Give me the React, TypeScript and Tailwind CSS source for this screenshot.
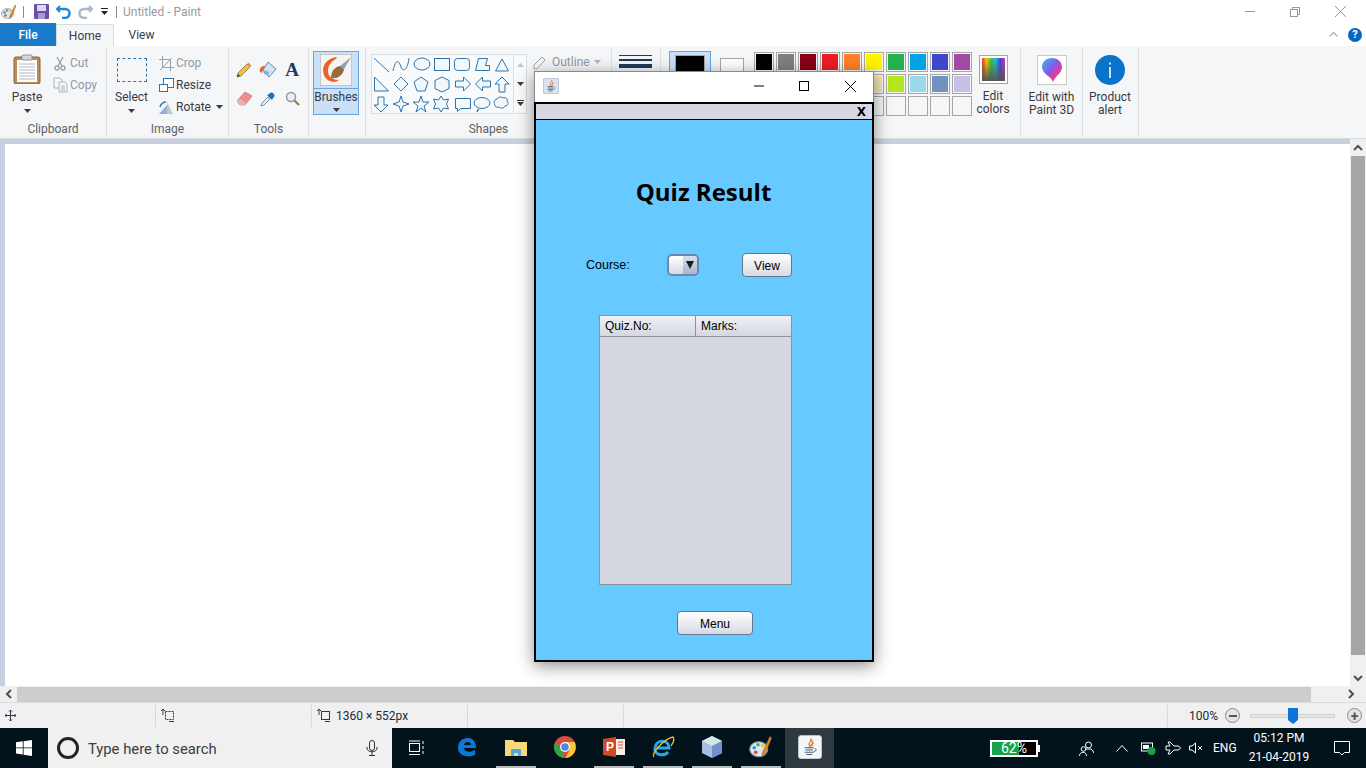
import React from 'react';

const UI_FONT = 'font-["Roboto","Noto_Sans",sans-serif]';

const PALETTE_ROW_1 = ['#000000', '#7f7f7f', '#880015', '#ed1c24', '#ff7f27', '#fff200', '#22b14c', '#00a2e8', '#3f48cc', '#a349a4'];
const PALETTE_ROW_2 = ['#ffffff', '#c3c3c3', '#b97a57', '#ffaec9', '#ffc90e', '#efe4b0', '#b5e61d', '#99d9ea', '#7092be', '#c8bfe7'];

const Caret: React.FC<{ color?: string }> = ({ color = '#3c3c3c' }) => (
  <svg width="7" height="4" viewBox="0 0 7 4"><path d="M0 0h7L3.5 4z" fill={color} /></svg>
);

const PaintLogo: React.FC<{ size: number }> = ({ size }) => (
  <svg width={size} height={size} viewBox="0 0 32 32">
    <ellipse cx="13" cy="19" rx="12" ry="10" fill="#dfe8ee" stroke="#7d98aa" strokeWidth="1.5" />
    <circle cx="7" cy="17" r="2.4" fill="#2d8fd5" />
    <circle cx="12" cy="13" r="2.4" fill="#45b04a" />
    <circle cx="18" cy="14" r="2.2" fill="#f0c030" />
    <circle cx="9" cy="23" r="2.4" fill="#d8453a" />
    <path d="M28 2l2 2-9 22-4 3 1-6z" fill="#e08a2c" stroke="#a86a20" strokeWidth=".8" />
  </svg>
);

const JavaIcon: React.FC<{ size: number; light?: boolean }> = ({ size, light }) => (
  <svg width={size} height={size} viewBox="0 0 32 32">
    <rect x=".5" y=".5" width="31" height="31" rx="4" fill={light ? '#f4f5f6' : '#dbe4ec'} stroke={light ? '#d0d4d8' : '#7d93a8'} />
    <path d="M17 5c2 3-4 5-2 9 1 1 2 2 1 3-1-3 5-5 3-8-1-2-1-3-2-4zM21 10c-2 1-3 3-2 5" fill="none" stroke="#e2752a" strokeWidth="1.5" />
    <path d="M9 17h12M10 20h10M9 23h12M11 26h8" stroke="#40607c" strokeWidth="1.5" />
    <path d="M22 18c3 0 3 4-1 4" fill="none" stroke="#40607c" strokeWidth="1.2" />
  </svg>
);

const ShapesArt: React.FC = () => (
  <svg width="140" height="58" viewBox="0 0 140 58" fill="#f1f8fc" stroke="#2f74ad" strokeWidth="1">
    {/* row 1 */}
    <path d="M2 3l15 14M21 16c3-14 6-10 8-4s7 2 8-9" fill="none" />
    <ellipse cx="50" cy="9" rx="8" ry="6" />
    <rect x="62.500" y="3.500" width="15" height="12" />
    <rect x="82.500" y="3.500" width="15" height="12" rx="3" />
    <path d="M106.500 3.500h9l-2 7h4v5h-14z" />
    <path d="M123.500 16l6.500-12 6.500 12z" />
    {/* row 2 */}
    <path d="M2.500 36V22l14 14z" />
    <path d="M29 22l7 7-7 7-7-7z" />
    <path d="M49 22l7 5-3 9h-8l-3-9z" />
    <path d="M70 22l7 3.500v8l-7 3.500-7-3.500v-8z" />
    <path d="M83.500 26h8v-4l7 7-7 7v-4h-8z" />
    <path d="M118.500 26h-8v-4l-7 7 7 7v-4h8z" />
    <path d="M130 22l7 7h-4v8h-6v-8h-4z" />
    {/* row 3 */}
    <path d="M6 42h6v8h4l-7 7-7-7h4z" />
    <path d="M29 41l2 6 6 2-6 2-2 6-2-6-6-2 6-2z" />
    <path d="M49 41l2 6h6l-5 4 2 6-5-4-5 4 2-6-5-4h6z" />
    <path d="M69 41l2.500 4 5-1-2 5 2 5-5-1-2.500 4-2.500-4-5 1 2-5-2-5 5 1z" />
    <path d="M83.500 43.500h15v10h-10l-3 3v-3h-2z" />
    <ellipse cx="110" cy="48" rx="8" ry="5.500" />
    <path d="M107 54l-2 3 1-3" />
    <path d="M125 44c2-3 5-2 6-1 3-1 5 1 4 3 2 2 1 5-2 5-1 2-4 3-6 1-3 1-5-1-4-3-2-1-1-4 2-5z" />
  </svg>
);

const SmallAction: React.FC<{ label: string; icon: React.ReactNode; muted?: boolean; caret?: boolean }> = ({ label, icon, muted, caret }) => (
  <div className="flex h-[22px] items-center gap-[2px]">
    <span className="flex w-[16px] items-center justify-center">{icon}</span>
    <span className={muted ? 'text-[#8f9aa6]' : 'text-[#3b3b46]'}>{label}</span>
    {caret && <span className="ml-[3px] flex"><Caret /></span>}
  </div>
);

const Group: React.FC<{ width: string; label?: string; children: React.ReactNode }> = ({ width, label, children }) => (
  <div className={`${width} mt-[2px] flex h-[89px] shrink-0 flex-col border-r border-[#dfe1e3]`}>
    <div className="flex flex-1">{children}</div>
    <div className="h-[16px] text-center leading-[16px] text-[#5f5f6b]">{label}</div>
  </div>
);

const PaletteCell: React.FC<{ color?: string }> = ({ color }) => (
  <div className="h-[20px] w-[20px] border border-[#a6a6a6] p-[1px]">
    {color && <div className="h-full w-full" style={{ background: color }} />}
  </div>
);

const Ribbon: React.FC = () => (
  <div className="flex h-[93px] border-b border-[#dadbdc] bg-[#f5f6f7]">
    {/* Clipboard */}
    <Group width="w-[107px]" label="Clipboard">
      <div className="flex w-[54px] flex-col items-center pt-[6px]">
        <svg width="28" height="30" viewBox="0 0 28 30">
          <rect x="1" y="3" width="26" height="27" rx="2" fill="#b98a5a" stroke="#8a6238" />
          <rect x="4" y="6" width="20" height="22" fill="#fff" />
          <path d="M6 10h16M6 13h16M6 16h16M6 19h16M6 22h16M6 25h16" stroke="#aab8c8" />
          <rect x="9" y="1" width="10" height="5" rx="1" fill="#d5d9dd" stroke="#8d9298" />
        </svg>
        <span className="mt-[6px] leading-[14px] text-[#3b3b46]">Paste</span>
        <span className="mt-[5px] flex"><Caret /></span>
      </div>
      <div className="ml-[-2px] pt-[4px]">
        <SmallAction label="Cut" muted icon={
          <svg width="14" height="15" viewBox="0 0 14 15" fill="none" stroke="#9aa8b8" strokeWidth="1.500"><path d="M4 1l5 9M10 1L5 10" /><circle cx="4" cy="12" r="2" /><circle cx="10" cy="12" r="2" /></svg>
        } />
        <SmallAction label="Copy" muted icon={
          <svg width="15" height="16" viewBox="0 0 15 16" fill="#f5f7fa" stroke="#aab4c0"><path d="M1 1h6l2 2v8H1z" /><path d="M6 5h6l2 2v8H6z" /><path d="M8 9h4M8 11h4M8 13h4" /></svg>
        } />
      </div>
    </Group>

    {/* Image */}
    <Group width="w-[122px]" label="Image">
      <div className="flex w-[48px] flex-col items-center pl-[1px] pt-[10px]">
        <div className="h-[24px] w-[30px] border border-dashed border-[#2f74ad]" />
        <span className="mt-[8px] leading-[14px] text-[#3b3b46]">Select</span>
        <span className="mt-[5px] flex"><Caret /></span>
      </div>
      <div className="pl-[3px] pt-[4px]">
        <SmallAction label="Crop" muted icon={
          <svg width="15" height="15" viewBox="0 0 15 15" fill="none" stroke="#93a3b8"><path d="M3.500 0v11.500H15M0 3.500h11.500V15M1 14L13 2" /></svg>
        } />
        <SmallAction label="Resize" icon={
          <svg width="15" height="14" viewBox="0 0 15 14" fill="#fff" stroke="#2f74ad"><rect x="4.500" y=".5" width="10" height="9" /><rect x=".5" y="6.500" width="8" height="7" /></svg>
        } />
        <SmallAction label="Rotate" caret icon={
          <svg width="16" height="15" viewBox="0 0 16 15"><path d="M1 14L9 5v9z" fill="#8fb0d4" /><path d="M9 14V2l6 12z" fill="#c4c8cc" /><path d="M2 7c1-3 3-5 6-5" fill="none" stroke="#2f74ad" strokeWidth="1.500" /></svg>
        } />
      </div>
    </Group>

    {/* Tools */}
    <Group width="w-[80px]" label="Tools">
      <div className="grid h-[58px] grid-cols-[24px_24px_24px] grid-rows-[29px_29px] items-center justify-items-center pl-[3px] pt-[7px]">
        <svg width="16" height="16" viewBox="0 0 16 16"><path d="M1 15l1-4 9-9 3 3-9 9z" fill="#f0c040" stroke="#7a6a30" strokeWidth=".7" /><path d="M11 2l1.500-1.500 3 3L14 5z" fill="#e88a80" /><path d="M1 15l1-3 2 2z" fill="#333" /></svg>
        <svg width="18" height="17" viewBox="0 0 18 17"><path d="M9 1l8 7-7 8-6-7z" fill="#cfe3f4" stroke="#5a8ab8" /><path d="M4 9l6 2-1 3-4-1z" fill="#6fb0e0" /><path d="M1 8c1-3 3-3 5-3l-2 4-1 3c-2-1-3-2-2-4z" fill="#e8642a" /></svg>
        <span className="font-['Liberation_Serif',serif] text-[19px] font-bold leading-none text-[#22395e]">A</span>
        <svg width="17" height="15" viewBox="0 0 17 15"><path d="M1 10l8-9 7 4-7 9H4z" fill="#ee8f8f" stroke="#c76a6a" strokeWidth=".7" /><path d="M1 10l3 4h5l1-2-6-4z" fill="#e8b4b4" /></svg>
        <svg width="16" height="16" viewBox="0 0 16 16"><path d="M1 15l1-3 6-6 2 2-6 6z" fill="#e4eef6" stroke="#5a7a98" strokeWidth=".8" /><path d="M7 4l5 5 1-2 1-1c2-2-2-6-4-4L9 3z" fill="#1c6fb8" /></svg>
        <svg width="15" height="15" viewBox="0 0 15 15" fill="none"><circle cx="6" cy="6" r="4.500" fill="#e8f0f6" stroke="#8a98a6" strokeWidth="1.500" /><path d="M9.500 9.500L14 14" stroke="#9a7a50" strokeWidth="2.200" /></svg>
      </div>
    </Group>

    {/* Brushes */}
    <Group width="w-[57px]">
      <div className="ml-[4px] mt-[3px] flex h-[64px] w-[46px] flex-col items-center border border-[#6aa5e0] bg-[#c9e0f7]">
        <div className="flex h-[37px] w-full items-center justify-center border-b border-[#6aa5e0]">
          <svg width="32" height="32" viewBox="0 0 32 32">
            <rect width="32" height="32" fill="#f4f4f4" stroke="#9a9a9a" />
            <path d="M16 3C6 5 1 12 4 21c2 6 10 9 15 5-6 0-11-3-11-9 0-6 4-10 9-13z" fill="#e8622a" />
            <path d="M31 3L19 13l4 4z" fill="#8fa0b0" />
            <path d="M20 12c-6 1-9 6-9 12 6 1 11-2 13-8z" fill="#9a6a3a" />
          </svg>
        </div>
        <span className="mt-[1px] leading-[14px] text-[#3b3b46]">Brushes</span>
        <span className="mt-[4px] flex"><Caret /></span>
      </div>
    </Group>

    {/* Shapes */}
    <Group width="w-[246px]" label="Shapes">
      <div className="ml-[5px] mt-[6px] flex h-[60px] w-[156px] border border-[#dcdfe2] bg-[#f9fafb]">
        <div className="w-[141px]"><ShapesArt /></div>
        <div className="flex flex-1 flex-col items-center border-l border-[#dcdfe2]">
          <div className="flex flex-1 items-center"><svg width="7" height="4" viewBox="0 0 7 4"><path d="M3.500 0L7 4H0z" fill="#bcc2c8" /></svg></div>
          <div className="flex flex-1 items-center"><Caret /></div>
          <div className="flex flex-1 flex-col items-center justify-center gap-[1px]"><div className="h-px w-[7px] bg-[#3c3c3c]" /><Caret /></div>
        </div>
      </div>
      <div className="ml-[6px] mt-[6px] flex h-[16px] items-center gap-[4px]">
        <svg width="15" height="15" viewBox="0 0 15 15"><path d="M1 14V10l8-8 3 3-8 9z" fill="#f6f7f8" stroke="#9aa4ae" /></svg>
        <span className="text-[#8f9aa6]">Outline</span>
        <Caret color="#b0b4b8" />
      </div>
    </Group>

    {/* Size */}
    <Group width="w-[49px]">
      <div className="ml-[7px] mt-[7px] flex w-[33px] flex-col gap-[3px]">
        <div className="h-px bg-[#1f3a5a]" />
        <div className="h-[2px] bg-[#1f3a5a]" />
        <div className="h-[4px] bg-[#1f3a5a]" />
        <div className="h-[7px] bg-[#1f3a5a]" />
      </div>
    </Group>

    {/* Colors */}
    <Group width="w-[360px]">
      <div className="ml-[8px] mt-[3px] h-[64px] w-[42px] border border-[#6aa5e0] bg-[#c9e0f7] pl-[5px] pt-[3px]">
        <div className="h-[30px] w-[30px] border border-[#a6a6a6] bg-black" />
      </div>
      <div className="ml-[9px] mt-[10px] h-[30px] w-[24px] border border-[#a6a6a6] bg-white" />
      <div className="ml-[10px] mt-[4px] grid grid-cols-[repeat(10,20px)] gap-[2px] self-start">
        {PALETTE_ROW_1.map(c => <PaletteCell key={c} color={c} />)}
        {PALETTE_ROW_2.map(c => <PaletteCell key={c} color={c} />)}
        {PALETTE_ROW_1.map(c => <PaletteCell key={c} />)}
      </div>
      <div className="flex w-[42px] flex-col items-center pt-[7px]">
        <div className="h-[29px] w-[29px] border border-[#a6a6a6] bg-white p-[2px]">
          <div className="h-full w-full bg-[linear-gradient(to_bottom,transparent,#555),linear-gradient(to_right,#ff3030,#ffd000,#30d030,#20c0f0,#4040e0,#e030c0)]" />
        </div>
        <span className="mt-[6px] leading-[13px] text-[#3b3b46]">Edit</span>
        <span className="leading-[13px] text-[#3b3b46]">colors</span>
      </div>
    </Group>

    {/* Paint 3D */}
    <Group width="w-[62px]">
      <div className="flex w-full flex-col items-center pt-[7px]">
        <div className="flex h-[30px] w-[30px] items-center justify-center border border-[#c8c8c8] bg-white">
          <svg width="22" height="26" viewBox="0 0 22 26">
            <defs>
              <linearGradient id="p3d" x1="0" y1="0" x2="1" y2="1">
                <stop offset="0" stopColor="#28c8e8" /><stop offset=".45" stopColor="#8858e8" /><stop offset=".75" stopColor="#f03888" /><stop offset="1" stopColor="#f8a020" />
              </linearGradient>
            </defs>
            <path d="M11 1c6 0 10 4 10 9 0 6-6 8-9 15-2-6-11-8-11-15C1 5 5 1 11 1z" fill="url(#p3d)" />
          </svg>
        </div>
        <span className="mt-[6px] whitespace-nowrap leading-[13px] text-[#3b3b46]">Edit with</span>
        <span className="whitespace-nowrap leading-[13px] text-[#3b3b46]">Paint 3D</span>
      </div>
    </Group>

    {/* Product alert */}
    <Group width="w-[56px]">
      <div className="flex w-full flex-col items-center pr-[1px] pt-[7px]">
        <svg width="30" height="30" viewBox="0 0 30 30">
          <circle cx="15" cy="15" r="15" fill="#0a74cc" />
          <rect x="14.200" y="12" width="1.600" height="11" fill="#fff" />
          <rect x="14.200" y="7.500" width="1.600" height="2" fill="#fff" />
        </svg>
        <span className="mt-[6px] whitespace-nowrap leading-[13px] text-[#3b3b46]">Product</span>
        <span className="whitespace-nowrap leading-[13px] text-[#3b3b46]">alert</span>
      </div>
    </Group>
  </div>
);

const ArrowGlyph: React.FC<{ d: string }> = ({ d }) => (
  <svg width="10" height="8" viewBox="0 0 10 8" fill="none" stroke="#505050" strokeWidth="2"><path d={d} /></svg>
);

const JavaButton: React.FC<{ label: string; className: string }> = ({ label, className }) => (
  <button className={`${className} flex items-center justify-center rounded-[4px] border border-[#64748a] bg-linear-to-b from-white to-[#d6dae3] pt-[1px] font-["Liberation_Sans",sans-serif] text-[12px] text-black`}>
    {label}
  </button>
);

const QuizWindow: React.FC = () => (
  <div className="absolute left-[534px] top-[71px] flex h-[591px] w-[340px] flex-col border-x border-t border-[#8a8a8a] bg-white shadow-[0_4px_16px_rgba(0,0,0,0.45)]">
    <div className="flex h-[30px] shrink-0 items-center pb-[2px] pl-[8px]">
      <JavaIcon size={16} />
      <svg className="ml-[195px]" width="10" height="2" viewBox="0 0 10 2"><path d="M0 1h10" stroke="#000" /></svg>
      <svg className="ml-[35px]" width="10" height="10" viewBox="0 0 10 10" fill="none"><rect x=".5" y=".5" width="9" height="9" stroke="#000" /></svg>
      <svg className="ml-[36px]" width="11" height="11" viewBox="0 0 11 11" fill="none"><path d="M0 0l11 11M11 0L0 11" stroke="#000" /></svg>
    </div>
    <div className="-mx-px flex flex-1 flex-col border-2 border-black bg-[#66c9ff] font-['Liberation_Sans',sans-serif]">
      <div className="flex h-[16px] shrink-0 items-center justify-end border-b border-black bg-[#d5d8e0] pr-[6px] font-['DejaVu_Sans',sans-serif] text-[12px] font-bold leading-none text-black">
        X
      </div>
      <div className="mt-[56px] flex h-[32px] justify-center pr-[1px]">
        <h1 className="font-['Open_Sans',sans-serif] text-[24px] font-bold leading-[32px] text-black">Quiz Result</h1>
      </div>
      <div className="mt-[45px] flex h-[24px] items-center pl-[50px]">
        <span className="w-[81px] pt-[1px] text-[12.5px] text-black">Course:</span>
        <div className="flex h-[22px] w-[32px] overflow-hidden rounded-[5px] border-2 border-[#6a88ad] bg-linear-to-b from-white to-[#d6dae3]">
          <div className="w-[14px]" />
          <div className="flex flex-1 items-center justify-center bg-linear-to-b from-[#d6e0ea] to-[#a6b8cc]">
            <svg width="8" height="8" viewBox="0 0 8 8"><path d="M0 0h8L4 8z" fill="#1a1a1a" /></svg>
          </div>
        </div>
        <JavaButton label="View" className="ml-[43px] h-[24px] w-[50px]" />
      </div>
      <div className="ml-[63px] mt-[38px] flex h-[270px] w-[193px] flex-col border border-[#8f929a] bg-[#d5d8e0]">
        <div className="flex h-[21px] border-b border-[#8f929a] bg-linear-to-b from-[#eef0f4] to-[#d5d8e0] text-[12px] leading-[20px] text-black">
          <div className="w-[96px] border-r border-[#8f929a] pl-[5px]">Quiz.No:</div>
          <div className="pl-[5px]">Marks:</div>
        </div>
      </div>
      <JavaButton label="Menu" className="ml-[141px] mt-[26px] h-[24px] w-[76px]" />
    </div>
  </div>
);

const StatusCell: React.FC<{ children?: React.ReactNode; width?: string }> = ({ children, width = 'w-[156px]' }) => (
  <div className={`${width} flex h-[22px] shrink-0 items-center border-r border-[#d9d9d9] pl-[5px]`}>{children}</div>
);

const TaskIcon: React.FC<{ children: React.ReactNode; running?: boolean; active?: boolean }> = ({ children, running, active }) => (
  <div className={`flex h-full w-[49px] flex-col items-center ${active ? 'bg-[#2e3a40]' : ''}`}>
    <div className="flex flex-1 items-center justify-center">{children}</div>
    <div className={`h-[2px] w-[40px] ${running ? 'bg-[#b9bcbe]' : ''}`} />
  </div>
);

export default function App() {
  return (
    <div className={`${UI_FONT} relative flex h-[768px] w-[1366px] flex-col overflow-hidden bg-white text-[12px]`}>
      {/* title bar */}
      <div className="flex h-[23px] shrink-0 items-center bg-white">
        <span className="ml-[1px] flex w-[16px]"><PaintLogo size={16} /></span>
        <div className="ml-[6px] h-[12px] w-px bg-[#8a8a8a]" />
        <svg className="ml-[10px]" width="15" height="15" viewBox="0 0 15 15"><rect width="15" height="15" rx="1" fill="#6a4fa8" /><rect x="3" y="1" width="9" height="6" fill="#dcd6ee" /><rect x="4" y="9" width="7" height="6" fill="#a898d0" /></svg>
        <svg className="ml-[7px]" width="15" height="14" viewBox="0 0 15 14" fill="none"><path d="M4 1L1 4l3 3" stroke="#1e88d8" strokeWidth="2" /><path d="M1 4h8c6 0 6 8 0 9H6" stroke="#1e88d8" strokeWidth="2.500" /></svg>
        <svg className="ml-[7px]" width="15" height="14" viewBox="0 0 15 14" fill="none"><path d="M11 1l3 3-3 3" stroke="#a8b8c8" strokeWidth="2" /><path d="M14 4H6c-6 0-6 8 0 9h3" stroke="#a8b8c8" strokeWidth="2.500" /></svg>
        <div className="ml-[8px] flex flex-col items-center gap-[2px]"><div className="h-px w-[7px] bg-[#222]" /><Caret color="#222" /></div>
        <div className="ml-[8px] h-[12px] w-px bg-[#8a8a8a]" />
        <span className="ml-[6px] text-[#9a9a9a]">Untitled - Paint</span>
        <svg className="ml-auto" width="10" height="1" viewBox="0 0 10 1"><path d="M0 .5h10" stroke="#999" /></svg>
        <svg className="ml-[35px]" width="10" height="10" viewBox="0 0 10 10" fill="none" stroke="#999"><rect x=".5" y="2.500" width="7" height="7" /><path d="M2.500 2.500v-2h7v7h-2" /></svg>
        <svg className="ml-[35px] mr-[20px]" width="11" height="11" viewBox="0 0 11 11" fill="none"><path d="M0 0l11 11M11 0L0 11" stroke="#999" /></svg>
      </div>

      {/* tabs */}
      <div className="flex h-[23px] shrink-0 items-center bg-white">
        <div className="flex h-full w-[56px] items-center justify-center bg-[#1979ca] font-medium text-white">File</div>
        <div className="mt-px flex h-full w-[58px] items-center justify-center border-x border-t border-[#dadbdc] bg-[#f5f6f7] text-[#3b3b46]">Home</div>
        <div className="flex w-[55px] items-center justify-center text-[#3b3b46]">View</div>
        <svg className="ml-auto" width="9" height="5" viewBox="0 0 9 5" fill="none" stroke="#aaa" strokeWidth="1.200"><path d="M.5 4.500l4-4 4 4" /></svg>
        <div className="ml-[10px] mr-[4px] flex h-[14px] w-[14px] items-center justify-center rounded-full bg-[#0a66c2] text-[11px] font-bold leading-none text-white">?</div>
      </div>

      <Ribbon />

      {/* canvas */}
      <div className="flex h-[547px] shrink-0">
        <div className="flex-1 bg-[#c6d0e0] pl-[5px] pt-[5px]">
          <div className="h-full w-full bg-white" />
        </div>
        <div className="flex w-[16px] flex-col items-center bg-[#f0f0f0]">
          <div className="flex h-[17px] items-center"><ArrowGlyph d="M1 6l4-4 4 4" /></div>
          <div className="h-[499px] w-[14px] bg-[#a6a6a6]" />
          <div className="mt-auto flex h-[17px] items-center"><ArrowGlyph d="M1 2l4 4 4-4" /></div>
        </div>
      </div>

      {/* horizontal scrollbar */}
      <div className="flex h-[16px] shrink-0 items-center bg-[#f0f0f0]">
        <div className="flex w-[17px] justify-center"><svg width="8" height="10" viewBox="0 0 8 10" fill="none" stroke="#505050" strokeWidth="2"><path d="M6 1L2 5l4 4" /></svg></div>
        <div className="h-[15px] w-[1294px] bg-[#cdcdcd]" />
        <div className="ml-auto flex w-[30px] justify-center"><svg width="8" height="10" viewBox="0 0 8 10" fill="none" stroke="#505050" strokeWidth="2"><path d="M2 1l4 4-4 4" /></svg></div>
      </div>

      {/* status bar */}
      <div className="flex h-[26px] shrink-0 items-center border-t border-[#dadada] bg-[#f0f0f0] text-[#222c3a]">
        <StatusCell width="w-[156px]">
          <svg width="11" height="11" viewBox="0 0 11 11" fill="none" stroke="#2a3a4a"><path d="M5.500 0v11M0 5.500h11M4 1.500L5.500 0 7 1.500M4 9.500L5.500 11 7 9.500M1.500 4L0 5.500 1.500 7M9.500 4L11 5.500 9.500 7" /></svg>
        </StatusCell>
        <StatusCell>
          <svg width="14" height="13" viewBox="0 0 14 13" fill="none" stroke="#2a3a4a"><rect x="4.500" y="2.500" width="8" height="8" strokeDasharray="2 1" /><path d="M2 0v6M0 2l2-2 2 2M8 12.500h5" /></svg>
        </StatusCell>
        <StatusCell>
          <svg width="14" height="13" viewBox="0 0 14 13" fill="none" stroke="#2a3a4a"><rect x="4.500" y="2.500" width="8" height="8" /><path d="M2 0v6M0 2l2-2 2 2M8 12.500h5" /></svg>
          <span className="ml-[5px]">1360 × 552px</span>
        </StatusCell>
        <StatusCell />
        <StatusCell width="w-[544px]" />
        <span className="ml-[21px] w-[36px]">100%</span>
        <div className="flex h-[15px] w-[15px] items-center justify-center rounded-full border border-[#8a8a8a] bg-[#e4e4e4]"><div className="h-[2px] w-[8px] bg-[#555]" /></div>
        <div className="relative ml-[10px] h-[4px] w-[85px] border border-[#cfd3d6] bg-[#e6e8ea]">
          <svg className="absolute left-[37px] top-[-7px]" width="10" height="16" viewBox="0 0 10 16"><path d="M0 0h10v12l-5 4-5-4z" fill="#0a74d8" /></svg>
        </div>
        <div className="ml-[12px] flex h-[15px] w-[15px] items-center justify-center rounded-full border border-[#8a8a8a] bg-[#e4e4e4] text-[14px] font-bold leading-none text-[#555]">+</div>
      </div>

      {/* taskbar */}
      <div className="flex h-[40px] shrink-0 items-center bg-[#03131c] text-white">
        <div className="flex h-full w-[48px] items-center justify-center">
          <svg width="16" height="16" viewBox="0 0 16 16" fill="#fff"><path d="M0 2.300l6.800-1v6.200H0zM7.600 1.200L16 0v7.500H7.600zM0 8.300h6.800v6.300l-6.800-1zM7.600 8.300H16V16l-8.400-1.200z" /></svg>
        </div>
        <div className="flex h-full w-[344px] items-center bg-[#f0f0f0] pl-[9px] text-[#3c3c3c]">
          <div className="h-[22px] w-[22px] rounded-full border-[3px] border-[#222]" />
          <span className="ml-[9px] pt-[2px] text-[14.8px]">Type here to search</span>
          <svg className="ml-auto mr-[14px]" width="12" height="16" viewBox="0 0 12 16" fill="none" stroke="#333"><rect x="3.500" y=".5" width="5" height="10" rx="2.500" /><path d="M1 7v1c0 5 10 5 10 0V7M6 12v3M3 15.500h6" /></svg>
        </div>
        <div className="flex h-full w-[50px] items-center justify-center">
          <svg width="16" height="16" viewBox="0 0 16 16" fill="none" stroke="#fff"><rect x=".5" y="3.500" width="10" height="8" /><path d="M0 1h11M0 14.500h11M14 1v3M14 6v3M14 11v3" /></svg>
        </div>
        <TaskIcon>
          <svg width="20" height="20" viewBox="0 0 20 20"><path d="M1 11C1 5 5 1 11 1c5 0 8 4 8 10H7c0 4 6 5 11 2v5c-7 3-17 1-17-7zM7 8h7c0-4-6-4-7 0z" fill="#0a78d8" /></svg>
        </TaskIcon>
        <TaskIcon running>
          <svg width="22" height="18" viewBox="0 0 22 18"><path d="M0 2h8l2 2h12v14H0z" fill="#f8d878" /><path d="M6 11h10v7H13v-3H9v3H6z" fill="#4fa8e0" /></svg>
        </TaskIcon>
        <TaskIcon>
          <svg width="22" height="22" viewBox="0 0 22 22">
            <circle cx="11" cy="11" r="11" fill="#dd4b3e" />
            <path d="M11 6h9.500a11 11 0 0 1-9 16L16 13z" fill="#f8c838" />
            <path d="M1.500 5.500L7 14l4 8A11 11 0 0 1 1.500 5.500z" fill="#2aa84a" />
            <circle cx="11" cy="11" r="5" fill="#fff" /><circle cx="11" cy="11" r="3.800" fill="#4a88e8" />
          </svg>
        </TaskIcon>
        <TaskIcon running>
          <svg width="22" height="20" viewBox="0 0 22 20">
            <rect x="8" y="2" width="14" height="16" fill="#fbeee8" />
            <path d="M0 2l13-2v20L0 18z" fill="#d04a22" />
            <path d="M15 5h5M15 8h5M15 11h5" stroke="#d04a22" />
            <text x="3" y="14" fill="#fff" fontSize="12" fontWeight="700" fontFamily="Liberation Sans, sans-serif">P</text>
          </svg>
        </TaskIcon>
        <TaskIcon running>
          <svg width="24" height="22" viewBox="0 0 24 22" fill="none"><path d="M6 12h12c0-9-13-9-14 0-1 7 9 9 13 4" stroke="#29a8e8" strokeWidth="3" /><path d="M3 21C0 17 13 3 22 1c2 2 0 6-2 9" stroke="#e8c030" strokeWidth="1.300" /></svg>
        </TaskIcon>
        <TaskIcon running>
          <svg width="20" height="22" viewBox="0 0 20 22"><path d="M10 0l10 5v12l-10 5L0 17V5z" fill="#a8c0e0" /><path d="M10 0l10 5-10 5L0 5z" fill="#d0e8e8" /><path d="M10 10l10-5v12l-10 5z" fill="#7090d0" /></svg>
        </TaskIcon>
        <TaskIcon running><PaintLogo size={24} /></TaskIcon>
        <TaskIcon active><JavaIcon size={24} light /></TaskIcon>

        {/* tray */}
        <div className="relative ml-[156px] flex h-[17px] w-[48px] items-center justify-center border-2 border-white bg-black text-[14px] leading-none">
          <div className="absolute inset-y-0 left-0 w-[62%] bg-[#16a34a]" />
          <span className="relative">62%</span>
        </div>
        <div className="h-[7px] w-[2px] bg-white" />
        <svg className="ml-[39px]" width="15" height="15" viewBox="0 0 15 15" fill="none" stroke="#fff"><circle cx="9.500" cy="4" r="3" /><circle cx="4.500" cy="8" r="2.300" /><path d="M.5 15c0-5 7-5 7 0M7 8h5c2 1 2.500 3 2.500 4" /></svg>
        <svg className="ml-[22px]" width="12" height="7" viewBox="0 0 12 7" fill="none" stroke="#fff"><path d="M.5 6.500l5.500-6 5.500 6" /></svg>
        <svg className="ml-[13px]" width="15" height="14" viewBox="0 0 15 14"><rect x=".5" y="2" width="11" height="8" fill="none" stroke="#fff" /><rect x="2" y="4" width="6" height="4" fill="#fff" /><circle cx="10.500" cy="10" r="4" fill="#16a34a" /></svg>
        <svg className="ml-[9px]" width="16" height="14" viewBox="0 0 16 14" fill="none" stroke="#fff"><path d="M1 5h4L3 1h2l4 4h4c3 1 3 3 0 4H9l-4 4H3l2-4H1z" /></svg>
        <svg className="ml-[8px]" width="14" height="12" viewBox="0 0 14 12" fill="none" stroke="#fff"><path d="M.5 4h2.500L6.500 1v10L3 8H.5zM9 4l4 4M13 4l-4 4" /></svg>
        <span className="ml-[10px] w-[26px] text-[12px]">ENG</span>
        <div className="ml-[9px] flex w-[62px] flex-col items-center whitespace-nowrap text-[12px] leading-[19px]">
          <span>05:12 PM</span>
          <span>21-04-2019</span>
        </div>
        <svg className="ml-[24px]" width="16" height="15" viewBox="0 0 16 15" fill="none" stroke="#fff"><path d="M.5.5h15v11h-5L8 14l-2.500-2.500h-5z" /></svg>
      </div>

      <QuizWindow />
    </div>
  );
}
